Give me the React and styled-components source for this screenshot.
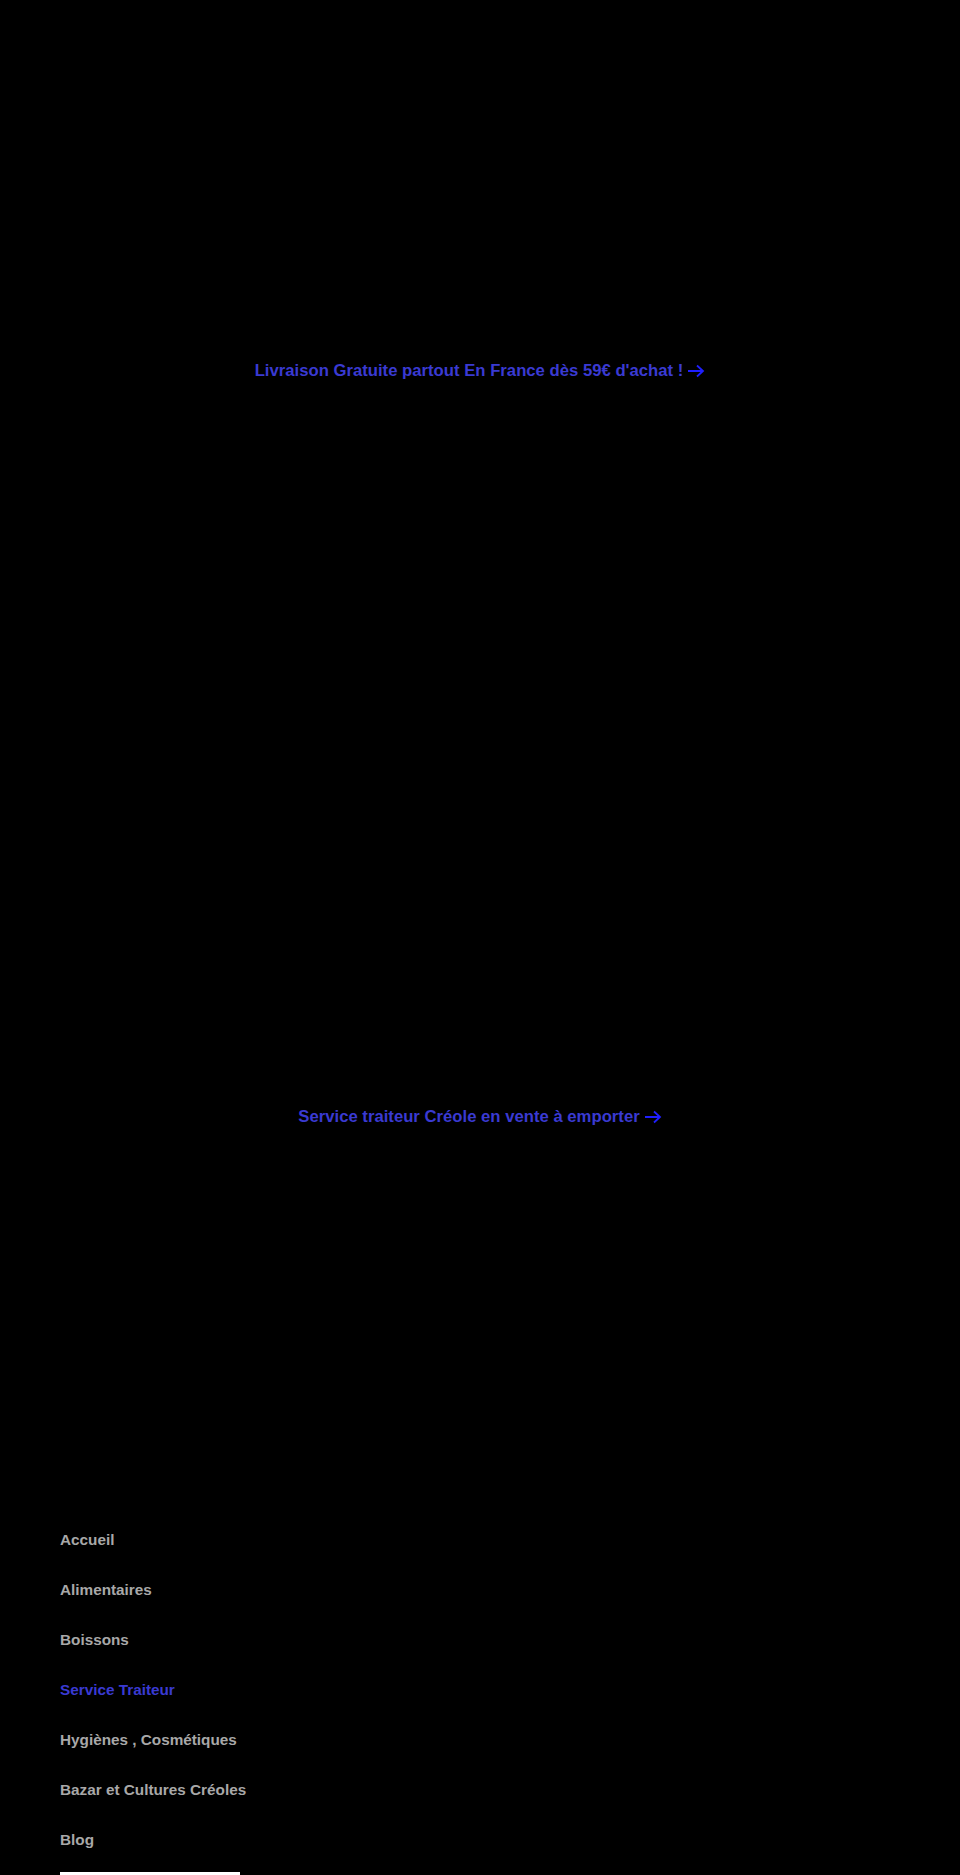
import React from "react";
import styled, { createGlobalStyle } from "styled-components";

const GlobalStyle = createGlobalStyle`
  html, body {
    margin: 0;
    padding: 0;
    background: #000;
    font-family: "Liberation Sans", Arial, sans-serif;
  }
`;

const links = [
  { label: "Accueil" },
  { label: "Alimentaires" },
  { label: "Boissons" },
  { label: "Service Traiteur", active: true },
  { label: "Hygiènes , Cosmétiques" },
  { label: "Bazar et Cultures Créoles" },
  { label: "Blog" },
];

export default function App() {
  return (
    <Page>
      <GlobalStyle />
      <Hero $height={742}>
        <HeroLink href="#">
          Livraison Gratuite partout En France dès 59€ d'achat ! <Arrow />
        </HeroLink>
      </Hero>
      <Hero $height={750}>
        <HeroLink href="#">
          Service traiteur Créole en vente à emporter <Arrow />
        </HeroLink>
      </Hero>
      <Menu>
        {links.map(({ label, active }) => (
          <MenuItem key={label} href="#" $active={active}>
            {label}
          </MenuItem>
        ))}
        <SearchBox />
      </Menu>
    </Page>
  );
}

function Arrow() {
  return (
    <ArrowSvg viewBox="0 0 18 14" aria-hidden="true">
      <path d="M1 7h15M10 1.5L16 7l-6 5.5" fill="none" stroke="currentColor" strokeWidth="1.8" />
    </ArrowSvg>
  );
}

const Page = styled.div`
  background: #000;
  min-height: 1875px;
`;

const Hero = styled.section`
  height: ${({ $height }) => $height}px;
  display: flex;
  align-items: center;
  justify-content: center;
`;

const HeroLink = styled.a`
  display: inline-flex;
  align-items: center;
  gap: 4px;
  color: #3a3ad2;
  font-size: 16.7px;
  font-weight: 700;
  text-decoration: none;
`;

const ArrowSvg = styled.svg`
  width: 18px;
  height: 14px;
  color: #1f1fff;
`;

const Menu = styled.nav`
  display: flex;
  flex-direction: column;
  align-items: flex-start;
  padding: 23px 60px 0;
`;

const MenuItem = styled.a`
  display: block;
  height: 50px;
  line-height: 50px;
  font-size: 15.3px;
  font-weight: 700;
  text-decoration: none;
  color: ${({ $active }) => ($active ? "#3a3ad2" : "#a8a8a8")};
`;

const SearchBox = styled.div`
  margin-top: 7px;
  width: 180px;
  height: 30px;
  background: #fff;
`;
